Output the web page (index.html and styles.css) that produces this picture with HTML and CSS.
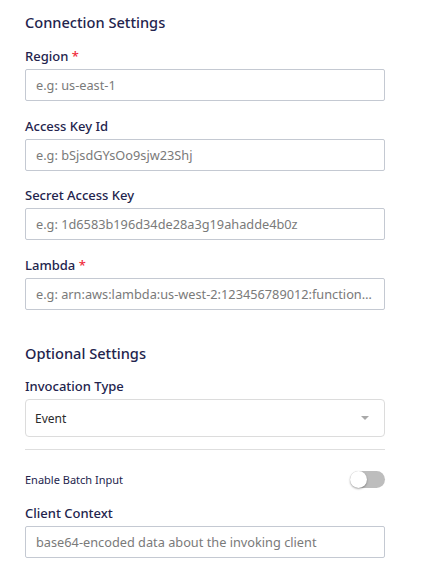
FILE: index.html
```html
<!DOCTYPE html>
<html>
<head>
<meta charset="utf-8">
<link rel="stylesheet" href="styles.css">
</head>
<body>
<div class="form">
  <h2 class="section-title">Connection Settings</h2>
  <div class="field first">
    <label class="label">Region <span class="req">*</span></label>
    <input class="input" placeholder="e.g: us-east-1">
  </div>
  <div class="field">
    <label class="label">Access Key Id</label>
    <input class="input" placeholder="e.g: bSjsdGYsOo9sjw23Shj">
  </div>
  <div class="field">
    <label class="label">Secret Access Key</label>
    <input class="input" placeholder="e.g: 1d6583b196d34de28a3g19ahadde4b0z">
  </div>
  <div class="field">
    <label class="label">Lambda <span class="req">*</span></label>
    <input class="input" placeholder="e.g: arn:aws:lambda:us-west-2:123456789012:function:my-function">
  </div>
  <h2 class="section-title optional">Optional Settings</h2>
  <div class="field after-title">
    <label class="label">Invocation Type</label>
    <div class="select">
      <span>Event</span>
      <span class="caret"></span>
    </div>
  </div>
  <div class="divider"></div>
  <div class="toggle-row">
    <span class="toggle-label">Enable Batch Input</span>
    <span class="toggle"><span class="knob"></span></span>
  </div>
  <div class="field after-toggle">
    <label class="label">Client Context</label>
    <input class="input" placeholder="base64-encoded data about the invoking client">
  </div>
</div>
</body>
</html>
```
FILE: styles.css
```css
html, body {
  margin: 0;
  padding: 0;
  background: #ffffff;
}
body {
  font-family: "Noto Sans", "Open Sans", sans-serif;
  color: #23244d;
}
.form {
  width: 360px;
  padding: 10px 0 0 25px;
  display: flex;
  flex-direction: column;
}
.section-title {
  margin: 0;
  font-size: 14.6px;
  font-weight: 500;
  line-height: 24px;
  color: #23244d;
}
.section-title.optional {
  margin-top: 31.5px;
}
.field {
  display: flex;
  flex-direction: column;
  margin-top: 15.67px;
}
.field.first {
  margin-top: 13px;
}
.field.after-title {
  margin-top: 12px;
}
.field.after-toggle {
  margin-top: 16px;
}
.label {
  font-size: 13px;
  font-weight: 500;
  line-height: 18px;
  margin-bottom: 4px;
  color: #23244d;
}
.req {
  color: #ef2b3b;
}
.input {
  box-sizing: border-box;
  height: 32px;
  width: 360px;
  border: 1px solid #c4c9d2;
  border-radius: 2px;
  padding: 0 10px;
  font-family: "Noto Sans", "Open Sans", sans-serif;
  font-size: 12.75px;
  color: #333;
  background: #fff;
  outline: none;
  text-overflow: ellipsis;
}
.input::placeholder {
  color: #7a7a7a;
}
.select {
  box-sizing: border-box;
  height: 38px;
  border: 1px solid #dcdcdc;
  border-radius: 4px;
  padding: 0 15px 0 9px;
  display: flex;
  align-items: center;
  justify-content: space-between;
  font-size: 12px;
  color: #2b2b2b;
}
.caret {
  width: 0;
  height: 0;
  border-left: 4px solid transparent;
  border-right: 4px solid transparent;
  border-top: 4px solid #a9a9a9;
}
.divider {
  height: 1px;
  background: #dedede;
  margin-top: 12px;
}
.toggle-row {
  display: flex;
  align-items: center;
  justify-content: space-between;
  margin-top: 21px;
}
.toggle-label {
  font-size: 11px;
  color: #23244d;
}
.toggle {
  position: relative;
  width: 35px;
  height: 17px;
  border-radius: 9px;
  background: #bdbdbd;
}
.knob {
  position: absolute;
  left: 0;
  top: 0;
  width: 17px;
  height: 17px;
  border-radius: 50%;
  background: #fff;
  box-shadow: 0 1px 2px rgba(0,0,0,0.35);
}
```
